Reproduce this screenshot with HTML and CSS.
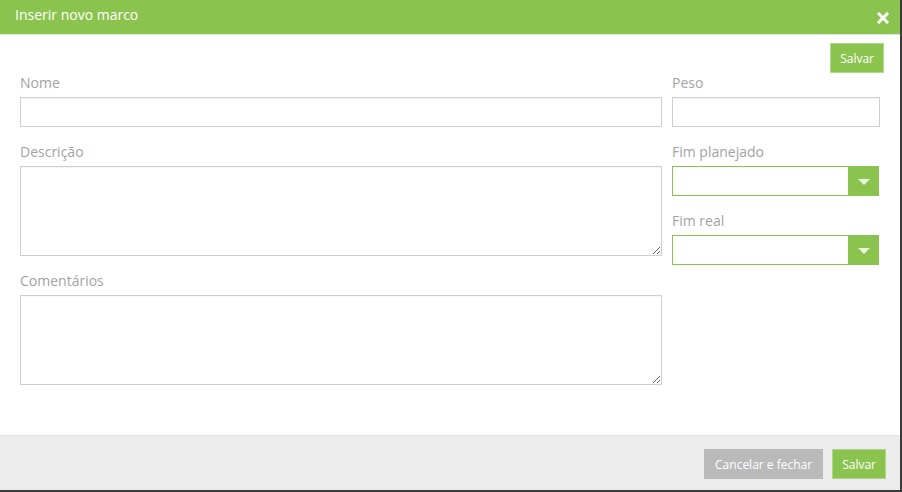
FILE: index.html
```html
<!DOCTYPE html>
<html lang="pt">
<head>
<meta charset="utf-8">
<title>Inserir novo marco</title>
<link rel="stylesheet" href="styles.css">
</head>
<body>
<div class="dialog">
  <div class="dialog-header">
    <span class="dialog-title">Inserir novo marco</span>
    <span class="close" aria-label="Fechar">
      <svg width="12" height="12" viewBox="0 0 12 12"><path d="M2 2 L10 10 M10 2 L2 10" stroke="#fff" stroke-width="3" stroke-linecap="square"/></svg>
    </span>
  </div>
  <div class="dialog-body">
    <div class="top-actions">
      <button class="btn btn-green">Salvar</button>
    </div>
    <div class="form-grid">
      <div class="col-left">
        <label class="field-label">Nome</label>
        <input class="input" type="text">
        <label class="field-label spaced">Descrição</label>
        <textarea class="textarea"></textarea>
        <label class="field-label spaced">Comentários</label>
        <textarea class="textarea"></textarea>
      </div>
      <div class="col-right">
        <label class="field-label">Peso</label>
        <input class="input" type="text">
        <label class="field-label spaced">Fim planejado</label>
        <div class="select">
          <div class="select-value"></div>
          <div class="select-btn"><span class="tri"></span></div>
        </div>
        <label class="field-label spaced">Fim real</label>
        <div class="select">
          <div class="select-value"></div>
          <div class="select-btn"><span class="tri"></span></div>
        </div>
      </div>
    </div>
  </div>
  <div class="dialog-footer">
    <button class="btn btn-gray">Cancelar e fechar</button>
    <button class="btn btn-green">Salvar</button>
  </div>
</div>
</body>
</html>
```
FILE: styles.css
```css
html, body {
  margin: 0;
  padding: 0;
}
body {
  background: #3b3b3b;
  width: 902px;
  height: 492px;
  font-family: "Open Sans", "Noto Sans", sans-serif;
  overflow: hidden;
}
.dialog {
  width: 900px;
  height: 490px;
  background: #fff;
  display: flex;
  flex-direction: column;
}
.dialog-header {
  height: 34px;
  background: #8bc34f;
  border-bottom: 1px solid #e3e3e3;
  display: flex;
  align-items: center;
  justify-content: space-between;
  padding: 0 11px 0 15px;
  box-sizing: content-box;
}
.dialog-title {
  color: #fff;
  font-size: 14px;
  line-height: 20px;
  margin-top: -4px;
}
.close {
  display: flex;
  width: 12px;
  height: 12px;
  margin-top: 2px;
}
.dialog-body {
  flex: 1;
  padding: 8px 16px 0 20px;
}
.top-actions {
  display: flex;
  justify-content: flex-end;
  height: 30px;
}
.btn {
  height: 30px;
  font-family: "Open Sans", "Noto Sans", sans-serif;
  font-size: 12px;
  color: #fff;
  border: 1px solid transparent;
  padding: 0 10px;
  cursor: pointer;
}
.btn-green {
  background: #8bc34f;
  border-color: #afd98a;
  padding: 0 9px;
}
.btn-gray {
  background: #bababa;
  border-color: #bababa;
  padding: 0 10px;
}
.form-grid {
  display: grid;
  grid-template-columns: 642px 208px;
  column-gap: 10px;
  margin-top: 1px;
}
.col-left, .col-right {
  display: flex;
  flex-direction: column;
}
.field-label {
  font-size: 14px;
  line-height: 18px;
  color: #a3a3a3;
  margin-bottom: 5px;
}
.field-label.spaced {
  margin-top: 16px;
}
.input {
  height: 30px;
  box-sizing: border-box;
  border: 1px solid #cfcfcf;
  margin: 0;
  padding: 4px 6px;
  box-shadow: inset 0 1px 1px rgba(0,0,0,0.04);
}
.textarea {
  height: 90px;
  box-sizing: border-box;
  border: 1px solid #cfcfcf;
  margin: 0;
  padding: 4px 6px;
  resize: vertical;
  box-shadow: inset 0 1px 1px rgba(0,0,0,0.04);
}
.select {
  display: flex;
  height: 30px;
  width: 207px;
  box-sizing: border-box;
}
.select-value {
  flex: 1;
  border: 1px solid #8bc34f;
  border-right: none;
  background: #fff;
}
.select-btn {
  width: 31px;
  background: #8bc34f;
  display: flex;
  align-items: center;
  justify-content: center;
}
.tri {
  width: 0;
  height: 0;
  border-left: 6px solid transparent;
  border-right: 6px solid transparent;
  border-top: 6px solid #eaf5df;
  margin-top: 1px;
}
.dialog-footer {
  height: 55px;
  box-sizing: border-box;
  border-top: 1px solid #e2e2e2;
  background: #ececec;
  display: flex;
  justify-content: flex-end;
  align-items: flex-start;
  gap: 9px;
  padding: 13px 14px 0 0;
}
```
